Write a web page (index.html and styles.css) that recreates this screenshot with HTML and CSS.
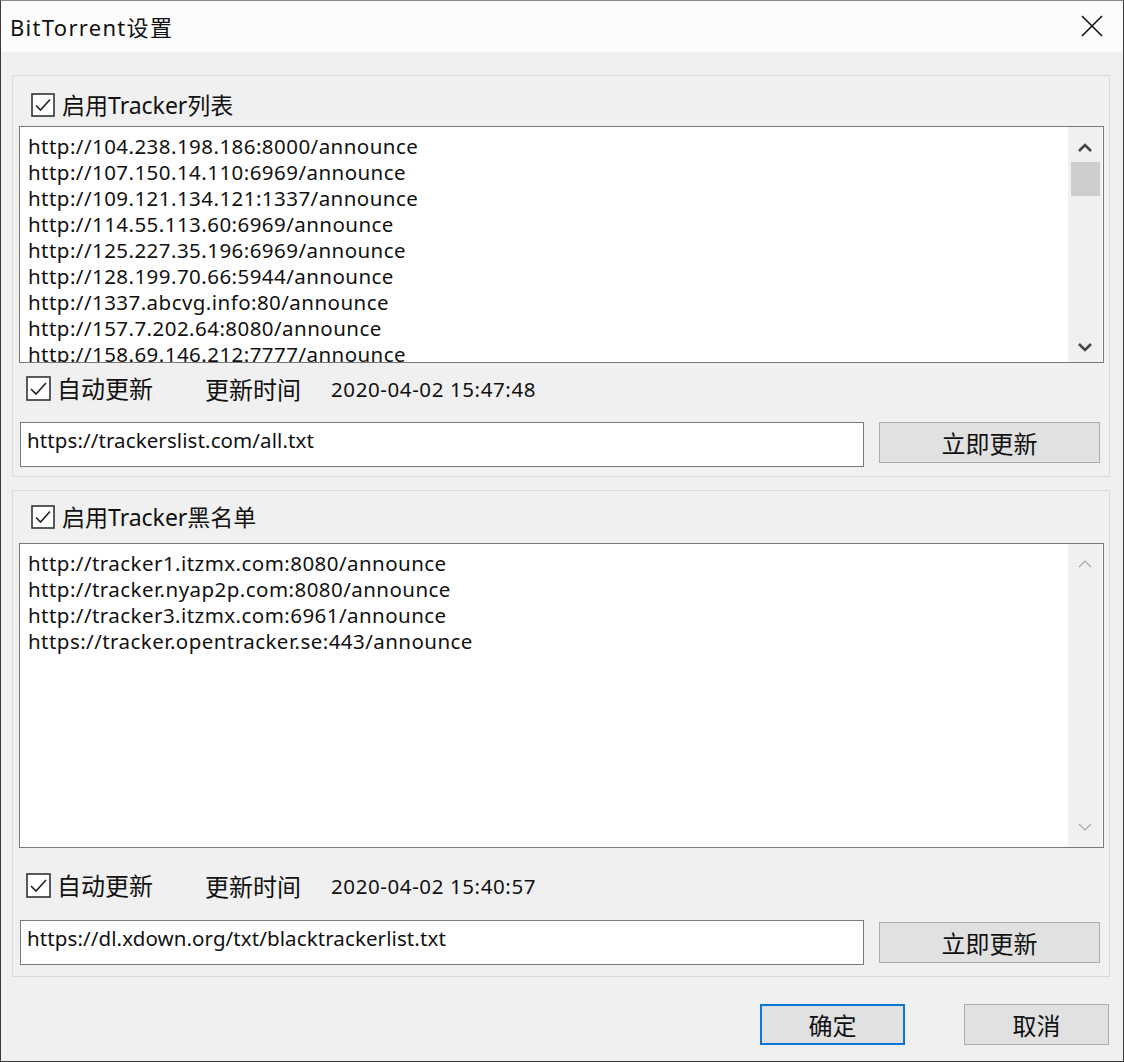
FILE: index.html
```html
<!DOCTYPE html>
<html lang="zh-CN">
<head>
<meta charset="utf-8">
<title>BitTorrent设置</title>
<link rel="stylesheet" href="styles.css">
</head>
<body>
<div class="window">
  <div class="titlebar">
    <span class="title">BitTorrent设置</span>
    <svg class="close" width="22" height="22" viewBox="0 0 22 22"><path d="M1 1L21 21M21 1L1 21" stroke="#111" stroke-width="1.6" fill="none"/></svg>
  </div>
  <div class="content">
    <section class="group g1">
      <label class="check head">
        <svg class="box" width="24" height="24" viewBox="0 0 24 24"><rect x="1" y="1" width="22" height="22" fill="#fff" stroke="#333" stroke-width="1.6"/><path d="M5 12.5L9.5 17L19 6.5" stroke="#222" stroke-width="1.6" fill="none"/></svg>
        <span>启用Tracker列表</span>
      </label>
      <div class="listbox lb1">
        <div class="lines">
          <div>http://104.238.198.186:8000/announce</div>
          <div>http://107.150.14.110:6969/announce</div>
          <div>http://109.121.134.121:1337/announce</div>
          <div>http://114.55.113.60:6969/announce</div>
          <div>http://125.227.35.196:6969/announce</div>
          <div>http://128.199.70.66:5944/announce</div>
          <div>http://1337.abcvg.info:80/announce</div>
          <div>http://157.7.202.64:8080/announce</div>
          <div>http://158.69.146.212:7777/announce</div>
        </div>
        <div class="scrollbar active">
          <svg class="arrow" width="16" height="12" viewBox="0 0 16 12"><path d="M2 10L8 4L14 10" stroke="#444" stroke-width="2.6" fill="none"/></svg>
          <div class="thumb"></div>
          <div class="spacer"></div>
          <svg class="arrow" width="16" height="12" viewBox="0 0 16 12"><path d="M2 2L8 8L14 2" stroke="#444" stroke-width="2.6" fill="none"/></svg>
        </div>
      </div>
      <div class="row r1">
        <label class="check small">
          <svg class="box" width="25" height="25" viewBox="0 0 25 25"><rect x="1" y="1" width="23" height="23" fill="#fff" stroke="#333" stroke-width="1.6"/><path d="M5 13L10 18L20 7" stroke="#222" stroke-width="1.6" fill="none"/></svg>
          <span>自动更新</span>
        </label>
        <span class="label-time">更新时间</span>
        <span class="date">2020-04-02 15:47:48</span>
      </div>
      <div class="row urlrow">
        <div class="input">https://trackerslist.com/all.txt</div>
        <button class="btn update">立即更新</button>
      </div>
    </section>

    <section class="group g2">
      <label class="check head">
        <svg class="box" width="24" height="24" viewBox="0 0 24 24"><rect x="1" y="1" width="22" height="22" fill="#fff" stroke="#333" stroke-width="1.6"/><path d="M5 12.5L9.5 17L19 6.5" stroke="#222" stroke-width="1.6" fill="none"/></svg>
        <span>启用Tracker黑名单</span>
      </label>
      <div class="listbox lb2">
        <div class="lines">
          <div>http://tracker1.itzmx.com:8080/announce</div>
          <div>http://tracker.nyap2p.com:8080/announce</div>
          <div>http://tracker3.itzmx.com:6961/announce</div>
          <div>https://tracker.opentracker.se:443/announce</div>
        </div>
        <div class="scrollbar">
          <svg class="arrow" width="16" height="12" viewBox="0 0 16 12"><path d="M2 9L8 3L14 9" stroke="#a8a8a8" stroke-width="1.2" fill="none"/></svg>
          <div class="spacer"></div>
          <svg class="arrow" width="16" height="12" viewBox="0 0 16 12"><path d="M2 3L8 9L14 3" stroke="#a8a8a8" stroke-width="1.2" fill="none"/></svg>
        </div>
      </div>
      <div class="row r2">
        <label class="check small">
          <svg class="box" width="25" height="25" viewBox="0 0 25 25"><rect x="1" y="1" width="23" height="23" fill="#fff" stroke="#333" stroke-width="1.6"/><path d="M5 13L10 18L20 7" stroke="#222" stroke-width="1.6" fill="none"/></svg>
          <span>自动更新</span>
        </label>
        <span class="label-time">更新时间</span>
        <span class="date">2020-04-02 15:40:57</span>
      </div>
      <div class="row urlrow u2">
        <div class="input">https://dl.xdown.org/txt/blacktrackerlist.txt</div>
        <button class="btn update">立即更新</button>
      </div>
    </section>

    <div class="footer">
      <button class="btn ok">确定</button>
      <button class="btn cancel">取消</button>
    </div>
  </div>
</div>
</body>
</html>
```

FILE: styles.css
```css
* { box-sizing: border-box; }
html, body { margin: 0; padding: 0; }
body {
  font-family: "Noto Sans", "Noto Sans CJK SC", sans-serif;
  color: #111;
  background: #f0f0f0;
}
.window {
  width: 1124px;
  height: 1062px;
  border: 1px solid #3a3a3a;
  border-top-color: #888;
  background: #f0f0f0;
  display: flex;
  flex-direction: column;
  overflow: hidden;
}
.titlebar {
  height: 51px;
  background: #fcfcfd;
  display: flex;
  align-items: center;
  justify-content: space-between;
  padding: 0 20px 2px 9px;
}
.title {
  font-size: 22px;
  letter-spacing: 1.3px;
}
.close { display: block; margin-top: 1px; }
.content {
  padding: 23px 13px 0 11px;
  display: flex;
  flex-direction: column;
}
.group {
  border: 1px solid #dadada;
  background: #f0f0f0;
  display: flex;
  flex-direction: column;
  padding: 0 5px 0 6px;
}
.g1 { height: 402px; padding-top: 17px; }
.g2 { height: 487px; margin-top: 13px; padding-top: 14px; }

.check {
  display: flex;
  align-items: center;
  gap: 7px;
  font-size: 23px;
  line-height: 24px;
}
.check .box { display: block; flex: none; }
.check.head { margin-left: 12px; height: 24px; }
.check.small { gap: 6px; font-size: 24px; }

.listbox {
  margin-top: 9px;
  border: 1px solid #7a7a7a;
  background: #fff;
  display: flex;
  overflow: hidden;
}
.lb1 { height: 237px; }
.lb2 { height: 305px; margin-top: 14px; }
.lines {
  flex: 1;
  padding: 6px 0 0 8px;
  font-size: 20.5px;
  line-height: 26px;
  white-space: nowrap;
  overflow: hidden;
  letter-spacing: 0.45px;
}
.scrollbar {
  width: 34px;
  flex: none;
  background: #f0f0f0;
  display: flex;
  flex-direction: column;
  align-items: center;
  padding: 14px 0 8px;
  margin-right: 1px;
}
.scrollbar .arrow { display: block; }
.scrollbar .thumb {
  width: 29px;
  height: 34px;
  background: #cdcdcd;
  margin-top: 9px;
}
.scrollbar .spacer { flex: 1; }
.lb2 .scrollbar { padding: 14px 0 14px; }

.row {
  display: flex;
  align-items: center;
}
.r1 { margin-top: 13px; height: 25px; padding-left: 7px; }
.r2 { margin-top: 25px; height: 25px; padding-left: 7px; }
.label-time {
  font-size: 24px;
  margin-left: 52px;
}
.date {
  font-size: 20.5px;
  margin-left: 30px;
  letter-spacing: 0.6px;
}
.urlrow {
  margin-top: 21px;
  align-items: flex-start;
  padding-left: 1px;
}
.u2 { margin-top: 22px; }
.input {
  width: 844px;
  height: 45px;
  border: 1px solid #7a7a7a;
  background: #fff;
  font-size: 20.5px;
  line-height: 24px;
  padding: 5px 0 0 6px;
  white-space: nowrap;
  letter-spacing: 0.1px;
}
.btn {
  font-family: "Noto Sans CJK SC", sans-serif;
  font-size: 24px;
  color: #111;
  background: #e1e1e1;
  border: 1px solid #adadad;
  padding: 0;
  line-height: 1;
  display: flex;
  align-items: center;
  justify-content: center;
}
.update {
  width: 221px;
  height: 41px;
  margin-left: 15px;
}
.u2 .update { margin-top: 2px; }
.footer {
  display: flex;
  justify-content: flex-end;
  gap: 59px;
  margin-top: 27px;
  padding-right: 1px;
}
.ok, .cancel { width: 145px; height: 41px; }
.ok { border: 2px solid #0a78d4; }
```
